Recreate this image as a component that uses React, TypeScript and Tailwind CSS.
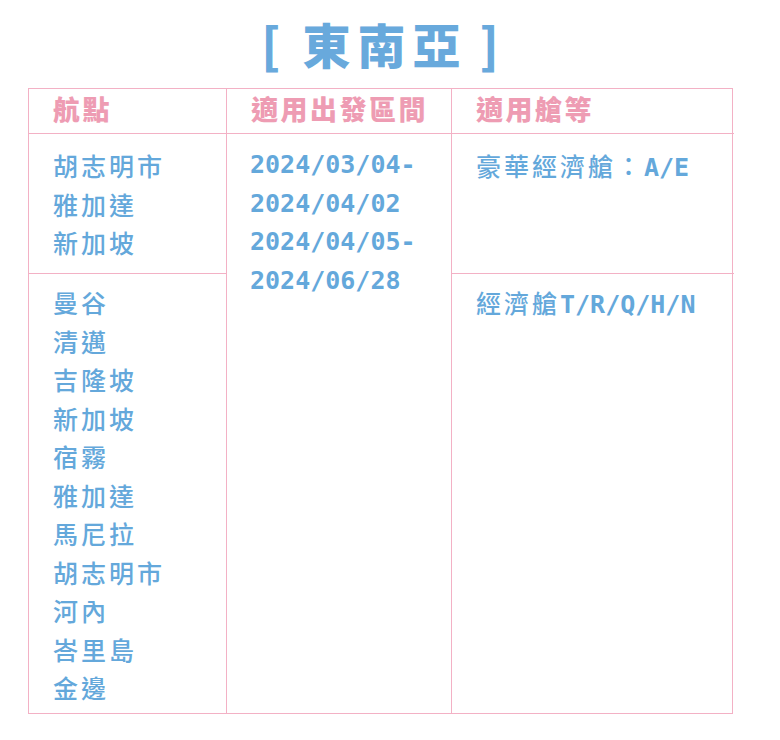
import React from "react";

const cjk = { fontFamily: '"DejaVu Sans Mono", "Noto Sans CJK TC", monospace' } as React.CSSProperties;

function Line({ children }: { children: React.ReactNode }) {
  return <div className="h-[38.5px] leading-[38.5px] whitespace-nowrap">{children}</div>;
}

function C({ children }: { children: React.ReactNode }) {
  return <span className="tracking-[3px] font-medium" style={{ fontFamily: '"Noto Sans CJK TC", sans-serif' }}>{children}</span>;
}

function L({ children }: { children: React.ReactNode }) {
  return <span className="font-bold tracking-[0px]" style={{ fontFamily: '"DejaVu Sans Mono", monospace' }}>{children}</span>;
}

export default function App() {
  const row2 = ["曼谷", "清邁", "吉隆坡", "新加坡", "宿霧", "雅加達", "馬尼拉", "胡志明市", "河內", "峇里島", "金邊"];
  return (
    <div className="w-[780px] h-[740px] bg-white" style={cjk}>
      <div className="h-[88px] flex items-start justify-center pt-[11px] pr-[20px]">
        <div
          className="text-[48px] leading-[64px] font-black text-[#68a9dc]"
          style={{ fontFamily: '"Noto Sans CJK TC", sans-serif' }}
        >
          <span className="mr-[22px]">[</span>
          <span className="tracking-[7px]">東南亞</span>
          <span className="ml-[12px]">]</span>
        </div>
      </div>
      <div className="pl-[28px]">
        <div className="w-[705px] grid grid-cols-[198px_225px_282px] grid-rows-[45px_140px_439px] border border-[#f3b1c5] text-[25px] text-[#64a8db]">
          {["航點", "適用出發區間", "適用艙等"].map((h, i) => (
            <div
              key={h}
              className={`flex items-center pl-[24px] pb-[3px] border-b border-[#f3b1c5] ${i < 2 ? "border-r" : ""} text-[27px] font-black text-[#ee9cb3] tracking-[2.5px]`}
              style={{ fontFamily: '"Noto Sans CJK TC", sans-serif' }}
            >
              {h}
            </div>
          ))}
          <div className="row-start-2 col-start-1 border-r border-b border-[#f3b1c5] pl-[24px] pt-[12px]">
            <Line><C>胡志明市</C></Line>
            <Line><C>雅加達</C></Line>
            <Line><C>新加坡</C></Line>
          </div>
          <div className="row-start-2 row-span-2 col-start-2 border-r border-[#f3b1c5] pl-[23px] pt-[12px]">
            <Line><L>2024/03/04-</L></Line>
            <Line><L>2024/04/02</L></Line>
            <Line><L>2024/04/05-</L></Line>
            <Line><L>2024/06/28</L></Line>
          </div>
          <div className="row-start-2 col-start-3 border-b border-[#f3b1c5] pl-[24px] pt-[12px]">
            <Line><C>豪華經濟艙：</C><L>A/E</L></Line>
          </div>
          <div className="row-start-3 col-start-1 border-r border-[#f3b1c5] pl-[24px] pt-[9px]">
            {row2.map((t, i) => (
              <Line key={i}><C>{t}</C></Line>
            ))}
          </div>
          <div className="row-start-3 col-start-3 pl-[24px] pt-[9px]">
            <Line><C>經濟艙</C><L>T/R/Q/H/N</L></Line>
          </div>
        </div>
      </div>
    </div>
  );
}
